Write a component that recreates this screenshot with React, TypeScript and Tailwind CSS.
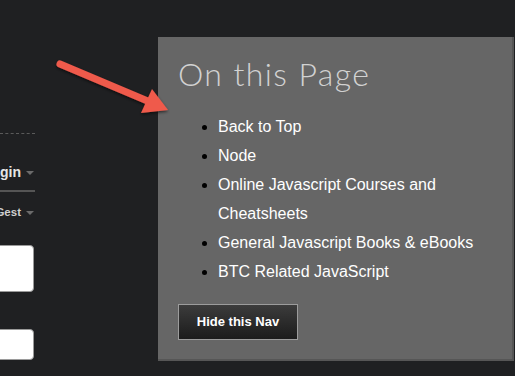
import React from "react";

const navItems = [
    "Back to Top",
    "Node",
    "Online Javascript Courses and Cheatsheets",
    "General Javascript Books & eBooks",
    "BTC Related JavaScript",
];

function Caret() {
    return <span className="ml-[5px] inline-block w-0 h-0 border-l-[4px] border-r-[4px] border-t-[4px] border-l-transparent border-r-transparent border-t-[#6b6b6b]" />
}

function Sidebar() {
    return <div className="w-[35px] shrink-0 overflow-hidden pt-[133px]" style={{ fontFamily: "'Liberation Sans', Arial, sans-serif" }}>
        <div className="border-t border-dashed border-[#5a5a5a] w-[35px]" />
        <div className="h-[58px] flex items-end justify-end pb-[7px] pr-[1px] border-b-2 border-[#555]">
            <span className="inline-flex items-center whitespace-nowrap text-[14px] font-bold text-[#e6e6e6]">gin<Caret /></span>
        </div>
        <div className="h-[40px] flex items-center justify-end pr-[1px] pt-[2px]">
            <span className="inline-flex items-center whitespace-nowrap text-[11.5px] font-bold text-[#cfcfcf]">Gest<Caret /></span>
        </div>
        <div className="mt-[13px] h-[47px] -ml-[10px] w-[44px] bg-white rounded-[4px] border border-[#9a9a9a]" />
        <div className="mt-[37px] h-[31px] -ml-[10px] w-[44px] bg-white rounded-[4px] border border-[#9a9a9a]" />
    </div>
}

function Arrow() {
    return <svg className="absolute left-0 top-0 pointer-events-none" width="200" height="130" viewBox="0 0 200 130">
        <defs>
            <filter id="sh" x="-20%" y="-20%" width="140%" height="140%">
                <feDropShadow dx="0" dy="1.5" stdDeviation="1.5" floodColor="#000" floodOpacity="0.6" />
            </filter>
        </defs>
        <g filter="url(#sh)" fill="#ef5a4c">
            <line x1="60" y1="64" x2="150" y2="102" stroke="#ef5a4c" strokeWidth="7" strokeLinecap="round" />
            <polygon points="168,110 141,113 152,89" />
        </g>
    </svg>
}

export default function App() {
    return <div className="relative w-[515px] h-[376px] bg-[#1f2022] overflow-hidden flex">
        <Sidebar />
        <div className="ml-[123px] mt-[37px] w-[356px] h-[324px] bg-[#666666] border-r-2 border-b-2 border-[#565656] pl-[20px] pt-[17px]">
            <h2 className="text-[32px] leading-[40px] font-light text-[#d2d2d2] tracking-[1.4px]" style={{ fontFamily: "Lato, 'Open Sans', sans-serif" }}>
                On this Page
            </h2>
            <ul className="mt-[18px] pl-[40px] list-disc marker:text-black text-white text-[16px] leading-[29px]" style={{ fontFamily: "'Liberation Sans', Arial, sans-serif" }}>
                {navItems.map((item) => (
                    <li key={item} className="pr-[30px]">{item}</li>
                ))}
            </ul>
            <button className="mt-[18px] w-[120px] h-[36px] border border-[#9c9c9c] bg-gradient-to-b from-[#3c3c3c] to-[#1c1c1c] text-white text-[13px] font-bold" style={{ fontFamily: "'Liberation Sans', Arial, sans-serif" }}>
                Hide this Nav
            </button>
        </div>
        <Arrow />
    </div>
}
